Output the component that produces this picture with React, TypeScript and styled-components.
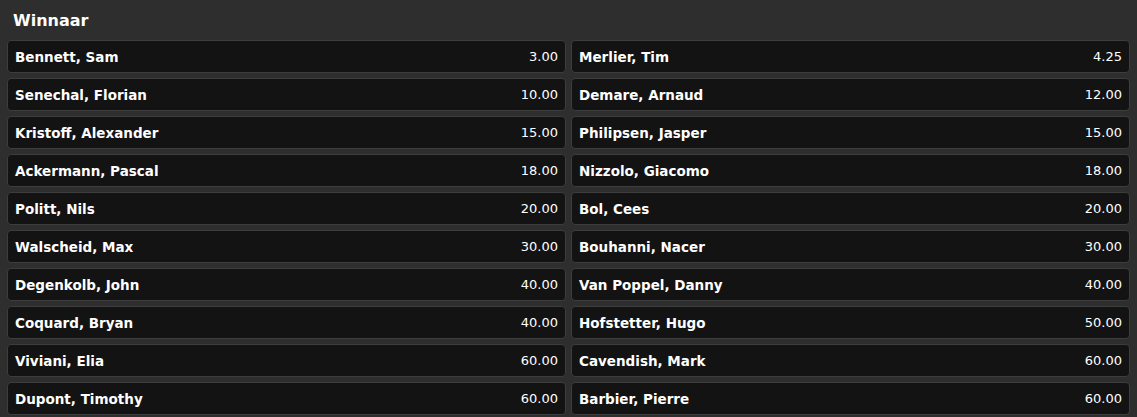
import React from "react";
import styled, { createGlobalStyle } from "styled-components";

const Global = createGlobalStyle`
  html, body { margin: 0; padding: 0; background: #2e2e2e; }
  body { font-family: "DejaVu Sans", Verdana, sans-serif; color: #fff; }
`;

const Page = styled.div`
  padding: 11px 7px 0 7px;
  background: #2e2e2e;
  min-height: 417px;
  box-sizing: border-box;
`;

const Title = styled.h2`
  margin: 0 0 9px 6px;
  font-size: 16px;
  font-weight: bold;
  line-height: 20px;
  color: #fff;
`;

const Grid = styled.div`
  display: grid;
  grid-template-columns: 1fr 1fr;
  column-gap: 5px;
  row-gap: 5px;
`;

const Cell = styled.div`
  display: flex;
  align-items: center;
  justify-content: space-between;
  height: 33px;
  box-sizing: border-box;
  padding: 0 7px;
  background: #131313;
  border: 1px solid #3d3d3d;
  border-radius: 4px;
  font-size: 13px;
`;

const Name = styled.span`
  font-weight: bold;
  font-size: 13.5px;
`;

const Odds = styled.span`
  font-weight: normal;
`;

const rows: [string, string, string, string][] = [
  ["Bennett, Sam", "3.00", "Merlier, Tim", "4.25"],
  ["Senechal, Florian", "10.00", "Demare, Arnaud", "12.00"],
  ["Kristoff, Alexander", "15.00", "Philipsen, Jasper", "15.00"],
  ["Ackermann, Pascal", "18.00", "Nizzolo, Giacomo", "18.00"],
  ["Politt, Nils", "20.00", "Bol, Cees", "20.00"],
  ["Walscheid, Max", "30.00", "Bouhanni, Nacer", "30.00"],
  ["Degenkolb, John", "40.00", "Van Poppel, Danny", "40.00"],
  ["Coquard, Bryan", "40.00", "Hofstetter, Hugo", "50.00"],
  ["Viviani, Elia", "60.00", "Cavendish, Mark", "60.00"],
  ["Dupont, Timothy", "60.00", "Barbier, Pierre", "60.00"],
];

export default function App() {
  return (
    <Page>
      <Global />
      <Title>Winnaar</Title>
      <Grid>
        {rows.map(([a, ao, b, bo]) => (
          <React.Fragment key={a}>
            <Cell>
              <Name>{a}</Name>
              <Odds>{ao}</Odds>
            </Cell>
            <Cell>
              <Name>{b}</Name>
              <Odds>{bo}</Odds>
            </Cell>
          </React.Fragment>
        ))}
      </Grid>
    </Page>
  );
}
